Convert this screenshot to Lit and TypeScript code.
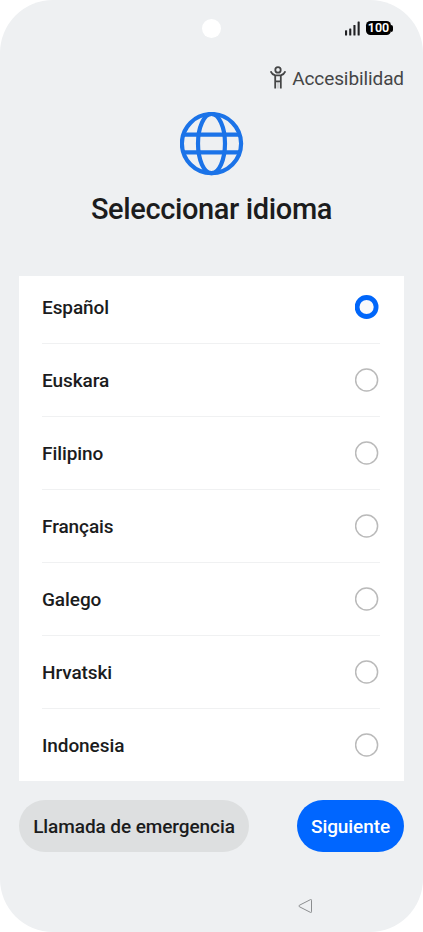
import { LitElement, html, svg, css } from "lit";
import { customElement, state } from "lit/decorators.js";
import { classMap } from "lit/directives/class-map.js";

const LANGUAGES = ["Español", "Euskara", "Filipino", "Français", "Galego", "Hrvatski", "Indonesia"];

const signalBars = svg`
  <rect x="0" y="9.2" width="2.1" height="5.3" rx="0.6"/>
  <rect x="4.2" y="7.4" width="2.1" height="7.1" rx="0.6"/>
  <rect x="8.4" y="4" width="2.1" height="10.5" rx="0.6"/>
  <rect x="12.6" y="0.4" width="2.1" height="14.1" rx="0.6"/>`;

@customElement("app-root")
export class AppRoot extends LitElement {
  @state() private selected = "Español";

  static styles = css`
    :host {
      display: block;
      height: 932px;
      background: #fff;
      font-family: Roboto, "Liberation Sans", sans-serif;
      color: #1b1c1d;
    }
    * { box-sizing: border-box; }
    svg { display: block; }
    button { border: 0; margin: 0; padding: 0; font: inherit; color: inherit; background: none; }
    .screen {
      height: 932px;
      padding: 0 19px;
      border-radius: 53px;
      background: #eef0f2;
      display: flex;
      flex-direction: column;
      overflow: hidden;
    }
    .status {
      height: 57px;
      display: grid;
      grid-template-columns: 1fr 19px 1fr;
      align-items: center;
      flex: none;
    }
    .camera { grid-column: 2; width: 19px; height: 19px; border-radius: 50%; background: #fff; }
    .indicators {
      display: flex;
      align-items: center;
      justify-content: flex-end;
      gap: 6px;
      padding: 0 11px 1px 0;
    }
    .battery { width: 27px; height: 14px; display: flex; align-items: center; }
    .level {
      width: 25px;
      height: 14px;
      border-radius: 4.5px;
      background: #000;
      color: #fff;
      font-size: 12.5px;
      line-height: 14px;
      font-weight: 600;
      text-align: center;
    }
    .tip { width: 1.5px; height: 7px; border-radius: 0 2px 2px 0; background: #000; }
    .access {
      height: 42px;
      display: flex;
      align-items: center;
      align-self: flex-end;
      gap: 6px;
      color: #444546;
      font-size: 19px;
      letter-spacing: -0.1px;
      flex: none;
    }
    .globe { align-self: center; margin-top: 13px; flex: none; }
    .title {
      margin: 16px 0 0;
      height: 34px;
      line-height: 34px;
      font-size: 29px;
      letter-spacing: -0.37px;
      font-weight: 500;
      text-align: center;
      flex: none;
    }
    .list {
      margin: 49.5px 0 0;
      height: 505.5px;
      padding: 0 24px 0 23px;
      background: #fff;
      display: flex;
      flex-direction: column;
      justify-content: flex-end;
      overflow: hidden;
      flex: none;
    }
    .row {
      height: 73px;
      flex: none;
      display: flex;
      align-items: center;
      justify-content: space-between;
      padding: 1px 1px 0 0;
      border-bottom: 1px solid #f0f1f2;
      font-size: 19px;
      letter-spacing: -0.08px;
      font-weight: 500;
      text-align: left;
    }
    .row:last-child { height: 72px; border-bottom: 0; }
    .radio { margin-bottom: 2px; fill: none; stroke: #bababa; stroke-width: 1.5; }
    .radio.on { fill: #f8f9fb; stroke: #0066fa; stroke-width: 4.8; }
    .actions { margin-top: 19px; display: flex; justify-content: space-between; flex: none; }
    .pill {
      height: 52px;
      padding-top: 1px;
      border-radius: 26px;
      font-size: 19px;
      letter-spacing: -0.08px;
      font-weight: 500;
    }
    .secondary { width: 230px; background: #dddfe0; }
    .primary { width: 107px; background: #0066ff; color: #fff; }
    .nav { height: 80px; padding: 46px 0 0 279px; }
  `;

  render() {
    return html`
      <main class="screen">
        <header class="status">
          <span class="camera"></span>
          <div class="indicators">
            <svg width="15" height="15" viewBox="0 0 15 15" fill="#202124">${signalBars}</svg>
            <div class="battery"><span class="level">100</span><span class="tip"></span></div>
          </div>
        </header>
        <button class="access">
          <svg width="16" height="24" viewBox="0 0 16 24" fill="none" stroke="#444546" stroke-width="1.8">
            <circle cx="8" cy="3.9" r="2.7"/>
            <path d="M.7 5.2C1.5 7.4 3 8.6 5.2 9.3H10.8C13 8.6 14.5 7.4 15.3 5.2M5.2 9.3V22.5M10.8 9.3V22.5M5.2 15.3H10.8"/>
            <path d="M8 15.3V22.5" stroke-width="1" opacity=".3"/>
          </svg>
          <span>Accesibilidad</span>
        </button>
        <svg class="globe" width="64" height="64" viewBox="0 0 64 64" fill="none" stroke="#1b73e8" stroke-width="4.2">
          <circle cx="31.5" cy="31.6" r="29.6"/>
          <ellipse cx="31.5" cy="31.6" rx="13.5" ry="29.6"/>
          <path d="M4 22.7H59.5M4 40.4H59.5"/>
        </svg>
        <h1 class="title">Seleccionar idioma</h1>
        <section class="list">
          ${LANGUAGES.map((name) => {
            const on = name === this.selected;
            return html`
              <button class="row" @click=${() => (this.selected = name)}>
                <span>${name}</span>
                <svg class=${classMap({ radio: true, on })} width="24" height="24" viewBox="0 0 24 24">
                  <circle cx="11.6" cy="12" r=${on ? 9.5 : 11}/>
                </svg>
              </button>`;
          })}
        </section>
        <div class="actions">
          <button class="pill secondary">Llamada de emergencia</button>
          <button class="pill primary">Siguiente</button>
        </div>
        <nav class="nav">
          <svg width="15" height="16" viewBox="0 0 15 16" fill="none" stroke="#8b8d8f" stroke-width="1" stroke-linejoin="round">
            <path d="M12.5 1.6Q13.5 1.2 13.5 2.2V13.8Q13.5 14.8 12.5 14.4L1.3 8.7Q.5 8 1.3 7.3Z"/>
          </svg>
        </nav>
      </main>`;
  }
}
